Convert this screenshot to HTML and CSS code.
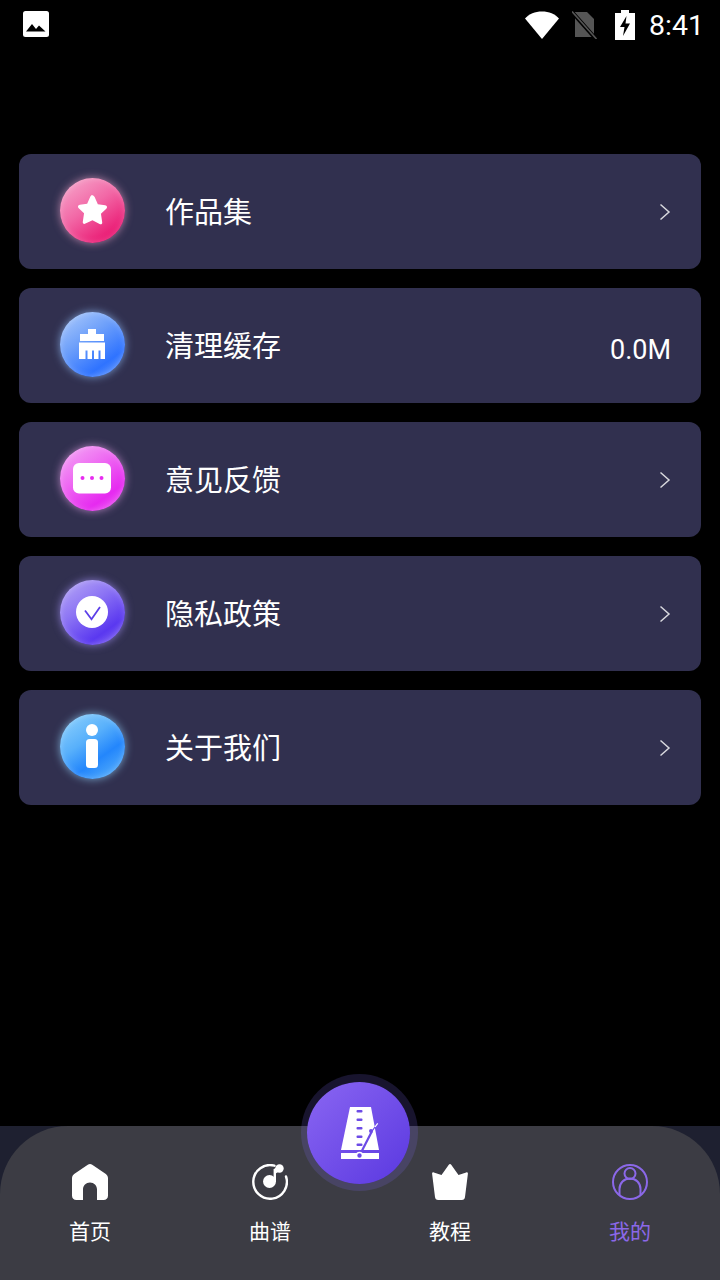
FILE: index.html
```html
<!DOCTYPE html>
<html lang="zh-CN">
<head>
    <meta charset="UTF-8">
    <meta name="viewport" content="width=device-width, initial-scale=1.0">
    <title>我的</title>
    <link rel="stylesheet" href="styles.css">
</head>
<body>

<div class="status-bar">
    <svg class="status-picture" width="26" height="26" viewBox="0 0 26 26">
        <rect x="0" y="0" width="26" height="26" rx="2.5" fill="#fff"/>
        <path d="M3 20.5 9 13l4 5 3-3.5 6.5 6z" fill="#000"/>
    </svg>
    <div class="status-right">
        <svg width="34" height="28" viewBox="0 0 34 28"><path d="M0 7.5C4 3 10 .5 17 .5S30 3 34 7.5L17 28z" fill="#fff"/></svg>
        <svg class="status-sim" width="26" height="28" viewBox="0 0 26 28">
            <path d="M3 1h12l7 7v18H3z" fill="#555"/>
            <path d="M0 1 24 28" stroke="#000" stroke-width="4"/>
            <path d="M0 .5 24.5 28" stroke="#555" stroke-width="1.6"/>
        </svg>
        <svg class="status-battery" width="20" height="30" viewBox="0 0 20 30">
            <path d="M6 0h8v3h6v27H0V3h6z" fill="#fff"/>
            <path d="M11.5 6 5 17h4.5L8 26l7-12.5h-4.5z" fill="#000"/>
        </svg>
        <span class="status-time">8:41</span>
    </div>
</div>

<div class="menu-list">
    <div class="menu-item">
        <div class="menu-icon icon-pink">
            <svg width="33" height="33" viewBox="0 0 34 34"><path d="M17 1.500c1 0 1.700.6 2.200 1.600l3.300 7.400 7.500 1c2 .3 2.600 2.200 1.200 3.600l-5.500 5.300 1.300 8.700c.3 1.800-1.100 2.700-2.700 1.900L17 27l-7.300 3.500c-1.600.8-3-.1-2.700-1.900l1.300-8.700-5.500-5.300c-1.400-1.400-.8-3.300 1.200-3.600l7.500-1 3.300-7.400c.5-1 1.200-1.600 2.200-1.600z" fill="#fff"/></svg>
        </div>
        <span class="menu-title">作品集</span>
        <svg class="menu-arrow" width="12" height="18" viewBox="0 0 12 18"><path d="M1.5 1.5 10 9l-8.500 7.500" fill="none" stroke="#d8d8de" stroke-width="1.5"/></svg>
    </div>
    <div class="menu-item">
        <div class="menu-icon icon-blue">
            <svg width="26" height="30" viewBox="0 0 26 30"><path d="M9 0h8v5h8v7H1V5h8zM0 13.500h26V30h-4.500V21.500h-2V30h-4.500V21.500h-2V30H8.500V21.500h-2V30H0z" fill="#fff"/></svg>
        </div>
        <span class="menu-title">清理缓存</span>
        <span class="menu-value">0.0M</span>
    </div>
    <div class="menu-item">
        <div class="menu-icon icon-magenta">
            <svg width="38" height="31" viewBox="0 0 38 31">
                <rect width="38" height="30.5" rx="6" fill="#fff"/>
                <circle cx="9.5" cy="15" r="2" fill="#e82cf0"/>
                <circle cx="19" cy="15" r="2" fill="#e82cf0"/>
                <circle cx="28.5" cy="15" r="2" fill="#e82cf0"/>
            </svg>
        </div>
        <span class="menu-title">意见反馈</span>
        <svg class="menu-arrow" width="12" height="18" viewBox="0 0 12 18"><path d="M1.5 1.5 10 9l-8.500 7.500" fill="none" stroke="#d8d8de" stroke-width="1.5"/></svg>
    </div>
    <div class="menu-item">
        <div class="menu-icon icon-violet">
            <svg width="32" height="32" viewBox="0 0 32 32">
                <circle cx="16" cy="16" r="16" fill="#fff"/>
                <path d="M9 14.500 15.500 23.300 24 11" fill="none" stroke="#5c3fe8" stroke-width="1.8"/>
            </svg>
        </div>
        <span class="menu-title">隐私政策</span>
        <svg class="menu-arrow" width="12" height="18" viewBox="0 0 12 18"><path d="M1.5 1.5 10 9l-8.500 7.500" fill="none" stroke="#d8d8de" stroke-width="1.5"/></svg>
    </div>
    <div class="menu-item">
        <div class="menu-icon icon-sky">
            <svg width="14" height="44" viewBox="0 0 14 44">
                <circle cx="7" cy="6" r="6" fill="#fff"/>
                <rect x="1" y="15" width="12" height="29" rx="3.5" fill="#fff"/>
            </svg>
        </div>
        <span class="menu-title">关于我们</span>
        <svg class="menu-arrow" width="12" height="18" viewBox="0 0 12 18"><path d="M1.5 1.5 10 9l-8.500 7.500" fill="none" stroke="#d8d8de" stroke-width="1.5"/></svg>
    </div>
</div>

<div class="tab-wrap">
    <div class="tab-bar">
        <div class="tab-item">
            <svg width="36" height="36" viewBox="0 0 36 36"><path d="M18 0c.8 0 1.500.3 2.200.8L33.500 9.800C35.100 10.900 36 12.400 36 14.300V31.500C36 34.300 34.300 36 31.500 36H25V25.500c0-4-3-7-7-7s-7 3-7 7V36H4.500C1.700 36 0 34.300 0 31.500V14.300C0 12.400.9 10.900 2.500 9.800L15.800.8C16.500.3 17.200 0 18 0z" fill="#fff"/></svg>
            <span class="tab-label">首页</span>
        </div>
        <div class="tab-item">
            <svg width="36" height="36" viewBox="0 0 36 36">
                <path d="M22.500 1.700A16.800 16.800 0 1 0 34 12.500" fill="none" stroke="#fff" stroke-width="2.4" stroke-linecap="round"/>
                <circle cx="17.5" cy="17.5" r="6.5" fill="#fff"/>
                <path d="M22.800 18V5" stroke="#fff" stroke-width="2.4"/>
                <circle cx="27.5" cy="4.5" r="4.2" fill="#fff"/>
                <path d="M22 5 27 1.500v6l-5 3z" fill="#fff"/>
            </svg>
            <span class="tab-label">曲谱</span>
        </div>
        <div class="tab-item">
            <svg width="36" height="36" viewBox="0 0 36 36"><path d="M18 0c.5 0 .9.3 1.200.7L26.500 11l7.700-2.600c1-.3 1.800.3 1.700 1.300L33 33c-.2 1.900-1.300 3-3.200 3H6.200C4.300 36 3.200 34.900 3 33L.1 9.700C0 8.700.8 8.100 1.800 8.400L9.500 11 16.800.7C17.100.3 17.500 0 18 0z" fill="#fff"/></svg>
            <span class="tab-label">教程</span>
        </div>
        <div class="tab-item tab-active">
            <svg width="36" height="36" viewBox="0 0 36 36" fill="none" stroke="#8b68e8" stroke-width="2">
                <circle cx="18" cy="18" r="17"/>
                <circle cx="18" cy="9.5" r="5.5"/>
                <path d="M7.500 31V25C7.500 19 12 14.500 18 14.500S28.500 19 28.500 25V31"/>
            </svg>
            <span class="tab-label">我的</span>
        </div>
    </div>
    <div class="center-btn">
        <svg class="center-icon" width="40" height="52" viewBox="0 0 40 52">
            <path d="M10 0H31L39 43H1z" fill="#fff"/>
            <rect x="1" y="46" width="38" height="6" fill="#fff"/>
            <g fill="#6c4ae6">
                <rect x="16.5" y="3" width="6" height="2.5" rx="1"/>
                <rect x="16.5" y="11.5" width="6" height="2.5" rx="1"/>
                <rect x="16.5" y="20" width="6" height="2.5" rx="1"/>
                <rect x="16.5" y="28.5" width="6" height="2.5" rx="1"/>
                <rect x="16.5" y="36.5" width="6" height="2.5" rx="1"/>
                <circle cx="31" cy="24" r="2"/>
            </g>
            <path d="M19.5 48.500 31.700 24.700" stroke="#6c4ae6" stroke-width="2.2"/>
            <path d="M31.700 24.700 35 20" stroke="#6c4ae6" stroke-width="1.2"/>
            <path d="M35 20 37.700 16.300" stroke="#fff" stroke-width="1.2"/>
            <circle cx="19.5" cy="48.5" r="3" fill="#6c4ae6" stroke="#fff" stroke-width="1.6"/>
        </svg>
    </div>
</div>

</body>
</html>
```

FILE: styles.css
```css
* {
    box-sizing: border-box;
}
html, body {
    height: 100%;
}
body {
    margin: 0;
    background-color: #000;
    color: #fff;
    font-family: Roboto, "Noto Sans CJK SC", sans-serif;
    display: flex;
    flex-direction: column;
}
.status-bar {
    height: 48px;
    padding: 11px 16px 0 23px;
    display: flex;
    justify-content: space-between;
    align-items: flex-start;
}
.status-right {
    display: flex;
    align-items: flex-start;
    height: 30px;
}
.status-right svg {
    flex-shrink: 0;
}
.status-sim {
    margin-left: 13px;
}
.status-battery {
    margin-left: 17px;
    margin-top: -1px;
}
.status-time {
    margin-left: 14px;
    font-size: 28.5px;
    line-height: 30px;
}
.menu-list {
    flex: 1;
    padding: 106px 19px 0;
    display: flex;
    flex-direction: column;
    gap: 19px;
}
.menu-item {
    height: 115px;
    background-color: #31304f;
    border-radius: 12px;
    padding: 0 30px 0 40.5px;
    display: flex;
    align-items: center;
}
.menu-icon {
    width: 65px;
    height: 65px;
    border-radius: 50%;
    margin-top: -3px;
    display: flex;
    align-items: center;
    justify-content: center;
    flex-shrink: 0;
}
.icon-pink {
    background: linear-gradient(145deg, #f6a6cb 5%, #f268a6 45%, #ea1872 85%, #f05a9a 100%);
    box-shadow: 0 0 8px rgba(250, 170, 210, 0.65), inset 0 0 6px rgba(255, 255, 255, 0.25);
}
.icon-blue {
    background: linear-gradient(145deg, #a9c8fb 5%, #6ea0fa 40%, #2f73ff 75%, #6ea0fa 100%);
    box-shadow: 0 0 8px rgba(150, 195, 255, 0.7), inset 0 0 6px rgba(255, 255, 255, 0.25);
}
.icon-magenta {
    background: linear-gradient(145deg, #f4a4f5 5%, #ee6af2 40%, #e62af0 75%, #ee6cf2 100%);
    box-shadow: 0 0 8px rgba(245, 170, 245, 0.65), inset 0 0 6px rgba(255, 255, 255, 0.25);
}
.icon-violet {
    background: linear-gradient(145deg, #b4a4f6 5%, #8c74f4 40%, #5a38f0 75%, #8a70f2 100%);
    box-shadow: 0 0 8px rgba(170, 150, 255, 0.7), inset 0 0 6px rgba(255, 255, 255, 0.25);
}
.icon-sky {
    background: linear-gradient(145deg, #8cd0fc 5%, #58b0fb 40%, #2386fc 65%, #64bafa 100%);
    box-shadow: 0 0 8px rgba(150, 215, 255, 0.7), inset 0 0 6px rgba(255, 255, 255, 0.25);
}
.menu-title {
    margin-left: 40.5px;
    margin-top: 2px;
    flex: 1;
    font-size: 29px;
    line-height: 40px;
}
.menu-value {
    font-size: 27px;
    margin-top: 9px;
}
.tab-wrap {
    position: relative;
    height: 154px;
    background-color: #1e2030;
}
.tab-bar {
    height: 154px;
    background-color: #3c3c44;
    border-radius: 68px 68px 0 0;
    padding-top: 38px;
    display: flex;
}
.tab-item {
    flex: 1;
    display: flex;
    flex-direction: column;
    align-items: center;
}
.tab-label {
    font-size: 21px;
    line-height: 30px;
    margin-top: 17px;
}
.tab-active .tab-label {
    color: #8b68e8;
}
.center-btn {
    position: absolute;
    left: 301px;
    top: -52px;
    width: 117px;
    height: 117px;
    border-radius: 50%;
    border-style: solid;
    border-width: 8px 8px 7px 6px;
    border-color: rgba(120, 100, 230, 0.2);
    background: linear-gradient(135deg, #8a66f2, #5a38e0);
    background-clip: padding-box;
    display: flex;
    align-items: center;
    justify-content: center;
}
.center-icon {
    margin-left: 2px;
}
```
